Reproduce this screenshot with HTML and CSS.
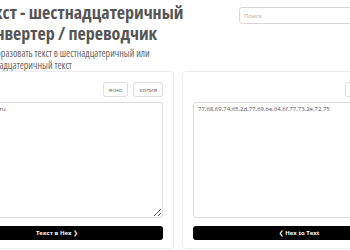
FILE: index.html
```html
<!DOCTYPE html>
<html lang="ru">
<head>
<meta charset="utf-8">
<title>Текст - шестнадцатеричный конвертер</title>
<link rel="stylesheet" href="styles.css">
</head>
<body>
<div class="page">
  <header class="header">
    <div class="intro">
      <h1 class="title">Текст - шестнадцатеричный конвертер / переводчик</h1>
      <p class="lead">Преобразовать текст в шестнадцатеричный или шестнадцатеричный текст</p>
    </div>
    <input class="search" type="text" placeholder="Поиск">
  </header>
  <main class="tools">
    <section class="card">
      <div class="toolbar">
        <button class="tbtn">ясно</button>
        <button class="tbtn">копия</button>
      </div>
      <textarea class="field" spellcheck="false">white-windows.ru</textarea>
      <button class="go">Текст в Hex <span class="chev">&#x276F;</span></button>
    </section>
    <section class="card">
      <div class="toolbar">
        <button class="tbtn">ясно</button>
        <button class="tbtn">копия</button>
      </div>
      <textarea class="field" spellcheck="false">77,68,69,74,65,2d,77,69,6e,64,6f,77,73,2e,72,75</textarea>
      <button class="go"><span class="chev">&#x276E;</span> Hex to Text</button>
    </section>
  </main>
</div>
</body>
</html>
```
FILE: styles.css
```css
html, body {
  margin: 0;
  padding: 0;
  background: #fff;
  overflow: hidden;
}
body {
  font-family: "Open Sans", "DejaVu Sans", sans-serif;
  color: #555;
}
.page {
  width: 476px;
  margin-left: -60px;
}
.header {
  display: flex;
  justify-content: space-between;
  align-items: flex-start;
  padding: 2px 0 0 38px;
  height: 67px;
  box-sizing: border-box;
}
.intro {
  width: 215px;
}
.title {
  margin: 0;
  font-size: 18px;
  line-height: 21px;
  font-weight: 700;
  font-stretch: 75%;
  color: #555;
}
.lead {
  margin: 3px 0 0;
  font-size: 10px;
  line-height: 12px;
  font-stretch: 80%;
  color: #666;
}
.search {
  width: 177px;
  height: 17px;
  margin-top: 5px;
  box-sizing: border-box;
  border: 1px solid #d8d8d8;
  border-radius: 3px;
  padding: 0 4px;
  font-family: inherit;
  font-size: 6px;
  color: #999;
  background: #fff;
}
.search::placeholder { color: #aaa; }
.tools {
  display: grid;
  grid-template-columns: 1fr 1fr;
  gap: 8px;
  margin-top: 4px;
}
.card {
  border: 1px solid #ececec;
  border-radius: 4px;
  padding: 10px 10px 8px;
  display: flex;
  flex-direction: column;
  box-shadow: 0 0 2px rgba(0,0,0,0.04);
}
.toolbar {
  display: flex;
  justify-content: flex-end;
  gap: 5px;
  height: 15px;
}
.tbtn {
  height: 15px;
  padding: 0 5px;
  border: 1px solid #dcdcdc;
  border-radius: 3px;
  background: #fff;
  font-family: inherit;
  font-size: 6px;
  color: #666;
}
.field {
  margin-top: 5px;
  height: 116px;
  box-sizing: border-box;
  border: 1px solid #dcdcdc;
  border-radius: 3px;
  padding: 2px 4px;
  font-family: inherit;
  font-size: 6px;
  line-height: 8px;
  color: #555;
  resize: vertical;
}
.go {
  margin-top: 8px;
  height: 14px;
  border: 0;
  border-radius: 3px;
  background: #000;
  color: #fff;
  font-family: inherit;
  font-size: 6px;
  font-weight: 700;
  padding: 0;
}
.chev { font-size: 6px; }
```
